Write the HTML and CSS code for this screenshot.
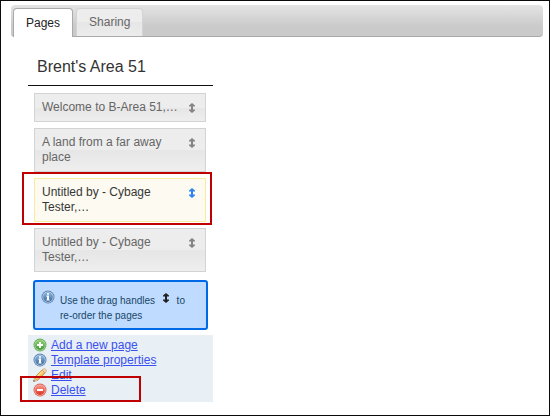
FILE: index.html
```html
<!DOCTYPE html>
<html lang="en">
<head>
<meta charset="utf-8">
<title>Brent's Area 51</title>
<link rel="stylesheet" href="styles.css">
</head>
<body>
<svg class="defs" aria-hidden="true">
  <defs>
    <linearGradient id="blue" x2="0" y2="1"><stop stop-color="#8fb8e0"/><stop offset="1" stop-color="#38689f"/></linearGradient>
    <linearGradient id="green" x2="0" y2="1"><stop stop-color="#8fce74"/><stop offset="1" stop-color="#3d9b35"/></linearGradient>
    <linearGradient id="red" x2="0" y2="1"><stop stop-color="#f79a8c"/><stop offset="1" stop-color="#d93226"/></linearGradient>
    <symbol id="drag" viewBox="0 0 8 10"><path fill="currentColor" d="M4 0 7 2.500V3.500H5V6.500H7V7.500L4 10 1 7.500V6.500H3V3.500H1V2.500Z"/></symbol>
    <symbol id="info" viewBox="0 0 14 14">
      <circle cx="7" cy="7" r="6.500" fill="#5c85b3"/><circle cx="7" cy="7" r="5.500" fill="#cfdeed"/><circle cx="7" cy="7" r="4.900" fill="url(#blue)"/>
      <path fill="#fff" d="M6 3.200h2v1.600H6zM5.500 5.600H8v3.800h.6v1.100H5.400V9.400H6V6.700h-.5z"/>
    </symbol>
    <symbol id="add" viewBox="0 0 14 14">
      <circle cx="7" cy="7" r="6.500" fill="#64a952"/><circle cx="7" cy="7" r="5.500" fill="#c5e5b6"/><circle cx="7" cy="7" r="4.900" fill="url(#green)"/>
      <path fill="#fff" d="M6 4h2v2h2v2H8v2H6V8H4V6h2z"/>
    </symbol>
    <symbol id="remove" viewBox="0 0 14 14">
      <circle cx="7" cy="7" r="6.500" fill="#dc6257"/><circle cx="7" cy="7" r="5.500" fill="#fac5bb"/><circle cx="7" cy="7" r="4.900" fill="url(#red)"/>
      <path fill="#fff" d="M4 6h6v2H4z"/>
    </symbol>
    <symbol id="pencil" viewBox="0 0 14 14">
      <path fill="#f3bd57" stroke="#b9822f" stroke-width=".7" d="M1.500 9.500 9 2l3 3-7.500 7.500z"/>
      <path fill="none" stroke="#ffe39b" stroke-width="1.200" d="m3 10 7-7"/>
      <path fill="#e9c9a0" stroke="#b9966a" stroke-width=".5" d="M1.500 9.500.5 13.500l4-1z"/>
      <path fill="#333" d="m.8 12-.4 1.600 1.600-.4z"/>
      <path fill="#f2d5ae" stroke="#c29b65" stroke-width=".6" d="m9 2 1-1q1.500-.8 2.700.3T13 4l-1 1z"/>
    </symbol>
  </defs>
</svg>
<div class="frame">
  <nav class="tabs">
    <button class="tab tab-active" type="button">Pages</button>
    <button class="tab" type="button">Sharing</button>
  </nav>
  <main class="panel">
    <h1 class="title">Brent's Area 51</h1>
    <ul class="pages">
      <li class="page"><span>Welcome to B-Area 51,…</span><svg class="drag"><use href="#drag"/></svg></li>
      <li class="page"><span>A land from a far away place</span><svg class="drag"><use href="#drag"/></svg></li>
      <li class="page page-hover"><span>Untitled by - Cybage Tester,…</span><svg class="drag"><use href="#drag"/></svg></li>
      <li class="page"><span>Untitled by - Cybage Tester,…</span><svg class="drag"><use href="#drag"/></svg></li>
    </ul>
    <div class="hint">
      <svg class="icon"><use href="#info"/></svg>
      <p class="hint-text">Use the drag handles <svg class="drag drag-inline"><use href="#drag"/></svg> to<br>re-order the pages</p>
    </div>
    <div class="actions">
      <div class="action"><svg class="icon"><use href="#add"/></svg><a href="#">Add a new page</a></div>
      <div class="action"><svg class="icon"><use href="#info"/></svg><a href="#">Template properties</a></div>
      <div class="action"><svg class="icon"><use href="#pencil"/></svg><a href="#">Edit</a></div>
      <div class="action action-marked"><svg class="icon"><use href="#remove"/></svg><a href="#">Delete</a></div>
    </div>
  </main>
</div>
</body>
</html>
```
FILE: styles.css
```css
*,
*::after {
  box-sizing: border-box;
}

body {
  margin: 0;
  background: #fff;
  color: #222;
  font: 12px/15px "Liberation Sans", Arial, sans-serif;
}

.defs {
  position: absolute;
  width: 0;
  height: 0;
}

.frame {
  min-height: 100vh;
  padding: 4px 6px 12px 10px;
  border: 1px solid #0b0b0b;
}

.tabs {
  display: flex;
  gap: 3px;
  align-items: flex-end;
  height: 32px;
  padding: 0 2px;
  border: solid #aaa;
  border-width: 0 0 1px;
  border-radius: 4px;
  background: linear-gradient(#e4e4e4, #cacaca 70%, #cacaca);
}

.tab {
  height: 28px;
  padding: 0 12px;
  border: 1px solid #d3d3d3;
  border-bottom: 0;
  border-radius: 4px 4px 0 0;
  background: linear-gradient(#ededed 50%, #e6e6e6 50%, #ececec);
  color: #666;
  font: inherit;
}

.tab-active {
  height: 29px;
  margin-bottom: -1px;
  border-color: #aaa;
  background: #fff;
  color: #222;
}

.panel {
  width: 185px;
  margin: 20px 0 0 17px;
}

.title {
  margin: 0;
  padding: 0 9px 8px;
  border-bottom: 1px solid #111;
  color: #333;
  font-size: 16px;
  font-weight: normal;
  line-height: 20px;
}

.pages {
  display: flex;
  flex-direction: column;
  gap: 6px;
  margin: 7px 7px 8px 6px;
  padding: 0;
  list-style: none;
}

.page {
  position: relative;
  display: flex;
  justify-content: space-between;
  padding: 6px 9px 6px 7px;
  border: 1px solid #d3d3d3;
  background: linear-gradient(#ededed 50%, #e6e6e6 50%, #eee);
  color: #666;
}

.page span {
  max-width: 142px;
}

.page:nth-child(n+2) span {
  max-width: 128px;
}

.page-hover {
  border-color: #faec9e;
  background: #fdfbf1;
  color: #363636;
}

.page-hover::after,
.action-marked::after {
  content: "";
  position: absolute;
  border: 2px solid #c00000;
  pointer-events: none;
}

.page-hover::after {
  inset: -7px -7px -4px -13px;
}

.drag {
  flex: none;
  width: 8px;
  height: 10px;
  margin-top: 3px;
  color: #858585;
}

.page-hover .drag {
  color: #2e83f5;
}

.icon {
  flex: none;
  width: 14px;
  height: 14px;
}

.hint {
  display: flex;
  gap: 5px;
  margin: 0 5px 5px;
  padding: 8px 6px 5px;
  border: 2px solid #006ae6;
  border-radius: 3px;
  background: #bfdbff;
  color: #174766;
  font-size: 10px;
}

.hint-text {
  margin: 3px 0 0;
}

.drag-inline {
  margin: 0 4px;
  color: #222;
  vertical-align: 1px;
}

.actions {
  padding: 3px 5px 4px;
  background: #e8eff5;
}

.action {
  position: relative;
  display: flex;
  gap: 4px;
}

.action a {
  color: #3a50f0;
}

.action-marked::after {
  top: -7px;
  bottom: -4px;
  left: -13px;
  width: 121px;
}
```
